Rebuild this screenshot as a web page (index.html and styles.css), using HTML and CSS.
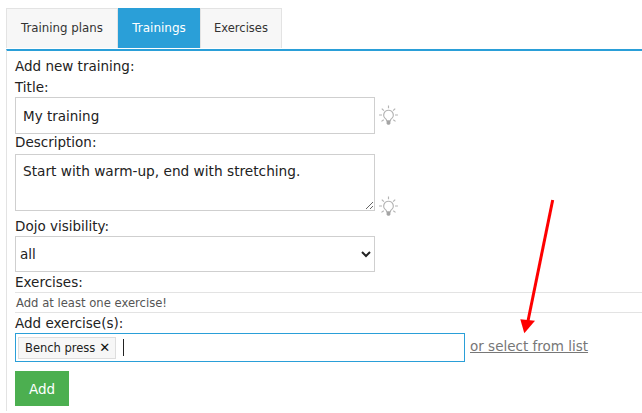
FILE: index.html
```html
<!DOCTYPE html>
<html lang="en">
<head>
    <meta charset="UTF-8">
    <title>Add training</title>
    <link rel="stylesheet" href="styles.css">
</head>
<body>
    <ul class="tabs">
        <li class="tab">Training plans</li>
        <li class="tab active">Trainings</li>
        <li class="tab">Exercises</li>
    </ul>

    <form class="panel">
        <div class="heading">Add new training:</div>

        <label class="field-label">Title:</label>
        <div class="field-row">
            <input class="text-input" type="text" value="My training">
            <svg class="bulb" viewBox="0 0 20 20"><use href="#bulb"></use></svg>
        </div>

        <label class="field-label desc-label">Description:</label>
        <div class="field-row bottom">
            <textarea class="text-area">Start with warm-up, end with stretching.</textarea>
            <svg class="bulb" viewBox="0 0 20 20"><use href="#bulb"></use></svg>
        </div>

        <label class="field-label dojo-label">Dojo visibility:</label>
        <select class="select-input">
            <option>all</option>
        </select>

        <div class="field-label">Exercises:</div>
        <div class="notice">Add at least one exercise!</div>

        <label class="field-label">Add exercise(s):</label>
        <div class="field-row">
            <div class="tag-input">
                <span class="tag">Bench press <span class="tag-x">✕</span></span>
                <span class="caret"></span>
            </div>
            <a class="list-link" href="#">or select from list</a>
        </div>

        <button class="add-btn" type="button">Add</button>
    </form>

    <!-- red annotation arrow over the form -->
    <svg class="arrow" viewBox="0 0 40 140">
        <line x1="32.7" y1="1" x2="8" y2="122" stroke="#fe0000" stroke-width="3"></line>
        <polygon points="0.3,120.300 15,121.700 4.300,134.300" fill="#fe0000"></polygon>
    </svg>

    <svg class="defs" width="0" height="0">
        <symbol id="bulb" viewBox="0 0 20 20">
            <g fill="none" stroke="#b4b4b4" stroke-width="1.100">
                <path d="M10 5a4.500 4.500 0 0 0-2.600 8.200c.6.5.8 1 .8 1.800h3.600c0-.8.2-1.300.8-1.800A4.500 4.500 0 0 0 10 5z"></path>
                <path d="M10 .5V3M1 9.500h2.800M16.200 9.500H19M3.600 3.400l2 2M16.400 3.400l-2 2M3.300 15.600l2.200-1.600M16.700 15.600l-2.200-1.600"></path>
            </g>
            <path d="M8.200 15h3.600v2.800l-1 1h-1.600l-1-1z" fill="#a4a4a4"></path>
        </symbol>
    </svg>
</body>
</html>
```

FILE: styles.css
```css
* {
    box-sizing: border-box;
}

body {
    margin: 0;
    padding: 8px 0 0 6px;
    height: 413px;
    overflow: hidden;
    position: relative;
    background: #fff;
    font-family: "DejaVu Sans", sans-serif;
    font-size: 13.5px;
    color: #222;
}

.tabs {
    display: flex;
    list-style: none;
    margin: 0;
    padding: 0;
    height: 40px;
}

.tab {
    width: 112px;
    height: 40px;
    line-height: 38px;
    text-align: center;
    background: #f7f7f7;
    border: 1px solid #e3e3e3;
    border-bottom: none;
    font-size: 11.8px;
    color: #333;
}

.tab:nth-child(2),
.tab:nth-child(3) {
    width: 82px;
}

.tab:nth-child(2) {
    font-size: 12px;
}

.tab:nth-child(3) {
    font-size: 11.5px;
}

.tab.active {
    background: #2a9fd8;
    border-color: #2a9fd8;
    color: #fff;
}

.panel {
    margin-top: 1px;
    border-top: 2px solid #2a9fd8;
    border-left: 1px solid #e3e3e3;
    padding-left: 8px;
    height: 362px;
}

.heading,
.field-label {
    display: block;
    height: 20px;
    line-height: 20px;
}

.heading {
    margin: 5px 0 1px;
}

.field-row {
    display: flex;
    align-items: center;
}

.field-row.bottom {
    align-items: flex-end;
}

.text-input,
.text-area,
.select-input {
    width: 360px;
    border: 1px solid #cfcfcf;
    background: #fff;
    font-family: inherit;
    font-size: 13.5px;
    color: #222;
    margin: 0;
    border-radius: 0;
}

.text-input {
    height: 37px;
    padding: 0 7px;
}

.desc-label {
    line-height: 17px;
}

.text-area {
    display: block;
    height: 57px;
    padding: 8px 7px;
    font-size: 13.7px;
    resize: vertical;
}

.bulb {
    width: 21px;
    height: 21px;
    margin-left: 3px;
}

.field-row.bottom .bulb {
    margin-bottom: -6px;
}

.dojo-label {
    margin-top: 5px;
}

.select-input {
    display: block;
    height: 36px;
    padding: 0;
}

.notice {
    height: 21px;
    line-height: 20px;
    border-top: 1px solid #e3e3e3;
    border-bottom: 1px solid #e3e3e3;
    font-size: 11.6px;
    color: #555;
    width: 627px;
    padding-left: 1px;
}

.tag-input {
    display: flex;
    align-items: center;
    width: 450px;
    height: 29px;
    border: 1px solid #2a9fd8;
    padding-left: 2px;
}

.tag {
    display: flex;
    align-items: center;
    gap: 4px;
    height: 22px;
    padding: 0 5px 0 6px;
    background: #f7f7f7;
    border: 1px solid #dedede;
    font-size: 11.5px;
    white-space: nowrap;
}

.tag-x {
    font-size: 13px;
    font-weight: bold;
    color: #111;
}

.caret {
    width: 1px;
    height: 17px;
    background: #222;
    margin-left: 7px;
}

.list-link {
    margin: -3px 0 0 5px;
    color: #777;
}

.add-btn {
    display: block;
    width: 54px;
    height: 35px;
    margin-top: 9px;
    border: none;
    background: #4caf50;
    color: #fff;
    font-family: inherit;
    font-size: 13.5px;
}

.arrow {
    position: absolute;
    left: 520px;
    top: 199px;
    width: 40px;
    height: 140px;
}

.defs {
    position: absolute;
}
```
